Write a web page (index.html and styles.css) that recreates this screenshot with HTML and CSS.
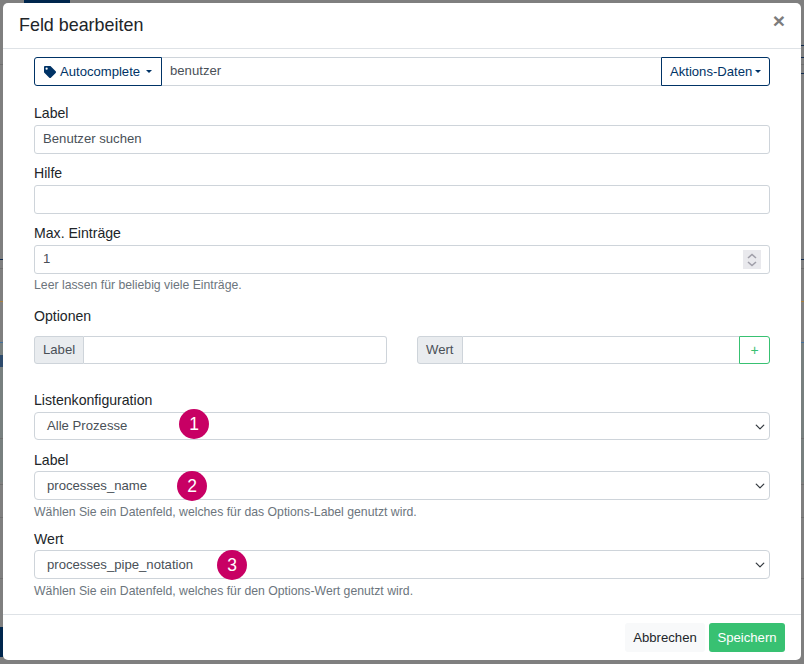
FILE: index.html
```html
<!DOCTYPE html>
<html lang="de">
<head>
<meta charset="utf-8">
<title>Feld bearbeiten</title>
<link rel="stylesheet" href="styles.css">
</head>
<body>
<div class="backdrop">
  <span class="bg-band"></span>
  <span class="bg-line l1"></span><span class="bg-line l2"></span><span class="bg-line l3"></span>
  <span class="bg-line l4"></span><span class="bg-line l5"></span><span class="bg-line l6"></span>
  <span class="bg-line l7"></span><span class="bg-line l8"></span><span class="bg-line l9"></span>
  <span class="bg-line l10"></span><span class="bg-line l11"></span><span class="bg-line l12"></span>
  <span class="bg-dark d1"></span><span class="bg-dark d2"></span><span class="bg-dark d3"></span>
</div>
<div class="modal">
  <header class="modal-header">
    <h1 class="modal-title">Feld bearbeiten</h1>
    <span class="close">×</span>
  </header>
  <main class="modal-body">
    <div class="input-group">
      <button class="btn-outline type-btn">
        <svg class="tag" viewBox="0 0 512 512" width="12" height="12"><path fill="#003366" d="M0 252V48C0 21 21 0 48 0h204c13 0 25 5 34 14l212 212c19 19 19 49 0 68L294 498c-19 19-49 19-68 0L14 286C5 277 0 265 0 252zM112 64a48 48 0 1 0 0 96 48 48 0 0 0 0-96z"/></svg>
        Autocomplete<span class="caret caret-wide"></span>
      </button>
      <div class="control joined name-input">benutzer</div>
      <button class="btn-outline action-btn">Aktions-Daten<span class="caret"></span></button>
    </div>

    <label class="field-label label-first">Label</label>
    <div class="control">Benutzer suchen</div>

    <label class="field-label">Hilfe</label>
    <div class="control"></div>

    <label class="field-label">Max. Einträge</label>
    <div class="control number">1
      <span class="spinner">
        <svg viewBox="0 0 18 18" width="18" height="18"><path d="M5 7l4-3.5L13 7M5 11l4 3.5L13 11" fill="none" stroke="#a09fa9" stroke-width="1.6"/></svg>
      </span>
    </div>
    <small class="help">Leer lassen für beliebig viele Einträge.</small>

    <div class="field-label options-label">Optionen</div>
    <div class="options-row">
      <div class="pair">
        <span class="addon">Label</span>
        <div class="control pair-input"></div>
      </div>
      <div class="pair">
        <span class="addon">Wert</span>
        <div class="control pair-input middle"></div>
        <span class="add-btn">+</span>
      </div>
    </div>

    <label class="field-label list-label">Listenkonfiguration</label>
    <div class="select s-first">Alle Prozesse<span class="badge b1">1</span><svg class="chev" viewBox="0 0 16 16"><path d="M2 5l6 6 6-6" fill="none" stroke="#343a40" stroke-width="2" stroke-linecap="round" stroke-linejoin="round"/></svg></div>

    <label class="field-label select-label">Label</label>
    <div class="select">processes_name<span class="badge b2">2</span><svg class="chev" viewBox="0 0 16 16"><path d="M2 5l6 6 6-6" fill="none" stroke="#343a40" stroke-width="2" stroke-linecap="round" stroke-linejoin="round"/></svg></div>
    <small class="help">Wählen Sie ein Datenfeld, welches für das Options-Label genutzt wird.</small>

    <label class="field-label select-label">Wert</label>
    <div class="select">processes_pipe_notation<span class="badge b3">3</span><svg class="chev" viewBox="0 0 16 16"><path d="M2 5l6 6 6-6" fill="none" stroke="#343a40" stroke-width="2" stroke-linecap="round" stroke-linejoin="round"/></svg></div>
    <small class="help">Wählen Sie ein Datenfeld, welches für den Options-Wert genutzt wird.</small>
  </main>
  <footer class="modal-footer">
    <button class="btn cancel">Abbrechen</button>
    <button class="btn save">Speichern</button>
  </footer>
</div>
</body>
</html>
```
FILE: styles.css
```css
* { box-sizing: border-box; }
html, body { margin: 0; height: 100%; }
body {
  width: 804px; height: 664px; overflow: hidden; position: relative;
  background: #7f7f7f;
  font-family: "Liberation Sans", Arial, sans-serif;
  font-size: 14px; line-height: 21px; color: #212529;
}
.backdrop { position: absolute; inset: 0; }
.bg-band { position: absolute; left: 0; right: 0; top: 342px; height: 140px; background: #78807f; }
.bg-line { position: absolute; height: 1px; background: #6f6f6f; left: 0; right: 0; }
.bg-dark { position: absolute; background: #00264d; }
.l1 { top: 45px; left: 790px; background: #0f2a4d; }
.l2 { top: 57px; left: 790px; background: #0f2a4d; }
.l3 { top: 73px; left: 790px; background: #0f2a4d; }
.l4 { top: 259px; background: #0f2a4d; }
.l5 { top: 268px; }
.l6 { top: 301px; background: #a8813c; }
.l7 { top: 342px; background: #44709c; }
.l8 { top: 438px; }
.l9 { top: 484px; }
.l10 { top: 517px; }
.l11 { top: 578px; }
.l12 { top: 64px; }
.d1 { left: 24px; top: 0; width: 46px; height: 3px; }
.d2 { left: 0; top: 627px; width: 3px; height: 30px; }
.d3 { left: 0; top: 355px; width: 3px; height: 12px; background: #2d4a6b; }

.modal {
  position: absolute; left: 3px; top: 3px; width: 798px; height: 657px;
  background: #fff; border-radius: 5px;
  display: flex; flex-direction: column;
}
.modal-header {
  height: 46px; flex: none; border-bottom: 1px solid #dee2e6;
  padding: 10px 16px 0; display: flex; justify-content: space-between;
}
.modal-title { margin: 0; font-size: 17.9px; line-height: 24px; font-weight: 400; }
.close { font-size: 21px; font-weight: 700; line-height: 21px; color: #7c7c7c; margin: -3px 0 0 0; }
.modal-body { flex: 1; padding: 8px 31px 0; min-height: 0; }
.modal-footer {
  height: 46px; flex: none; border-top: 1px solid #dee2e6;
  display: flex; justify-content: flex-end; align-items: flex-start; gap: 4px;
  padding: 8px 16px 0 0;
}

.input-group { display: flex; height: 29px; }
.btn-outline {
  font: inherit; font-size: 13.1px; color: #003366; background: #fff;
  border: 1px solid #003366; height: 29px; padding: 0; display: flex; align-items: center;
}
.type-btn { width: 128px; border-radius: 3px 0 0 3px; padding-left: 9px; }
.tag { margin-right: 4px; }
.action-btn { width: 109px; border-radius: 0 3px 3px 0; padding-left: 8px; }
.caret { width: 0; height: 0; border: 3.5px solid transparent; border-top-color: #003366; border-bottom: 0; margin-left: 3px; }
.caret-wide { margin-left: 6px; }

.control {
  height: 29px; border: 1px solid #ced4da; border-radius: 3px; background: #fff;
  font-size: 13.15px; line-height: 26px; color: #495057; padding: 0 8px;
}
.joined { flex: 1; border-left: 0; border-right: 0; border-radius: 0; }
.number { position: relative; }
.spinner {
  position: absolute; right: 8px; top: 4px; width: 18px; height: 19px;
  background: #e9e9ed; display: flex; align-items: center; justify-content: center;
}
.field-label { display: block; margin: 9px 0 1px; line-height: 21px; height: 21px; font-size: 14.1px; color: #212529; }
.label-first { margin-top: 17px; }
.help { display: block; font-size: 12.25px; line-height: 16px; color: #6c757d; margin-top: 3px; }
.select + .help { margin: 4px 0 -1px; }
.options-label { margin: 13px 0 9px; }
.options-row { display: flex; gap: 30px; height: 28px; }
.pair { flex: 1; display: flex; }
.addon {
  height: 28px; padding: 0 8px; border: 1px solid #ced4da; background: #e9ecef;
  border-radius: 3px 0 0 3px; font-size: 13.15px; line-height: 26px; color: #495057;
}
.pair-input { flex: 1; height: 28px; border-left: 0; border-radius: 0 3px 3px 0; }
.pair-input.middle { border-right: 0; border-radius: 0; }
.add-btn {
  width: 31px; height: 28px; border: 1px solid #38c172; border-radius: 0 3px 3px 0;
  color: #38c172; font-size: 14px; line-height: 26px; text-align: center;
}
.list-label { margin: 26px 0 1px; }
.select-label { margin: 10px 0 0; }
.select {
  position: relative; height: 28px; border: 1px solid #ced4da; border-radius: 4px;
  font-size: 13.15px; line-height: 25px; color: #495057; padding-left: 12px; background: #fff;
}
.select-label + .select { height: 29px; line-height: 27px; }
.chev { position: absolute; right: 4px; top: 9px; width: 10px; height: 10px; }
.badge {
  position: absolute; width: 30px; height: 30px; border-radius: 50%; background: #c80064;
  color: #fff; font-size: 17.5px; line-height: 30px; text-align: center; top: -1px;
}
.b1 { left: 144px; top: -4px; }
.b2 { left: 142px; }
.b3 { left: 182px; }
.btn { font: inherit; font-size: 13.15px; height: 29px; border: 0; border-radius: 3px; padding: 0; }
.cancel { width: 80px; background: #f8f9fa; color: #212529; }
.save { width: 76px; background: #38c172; color: #fff; }
```
